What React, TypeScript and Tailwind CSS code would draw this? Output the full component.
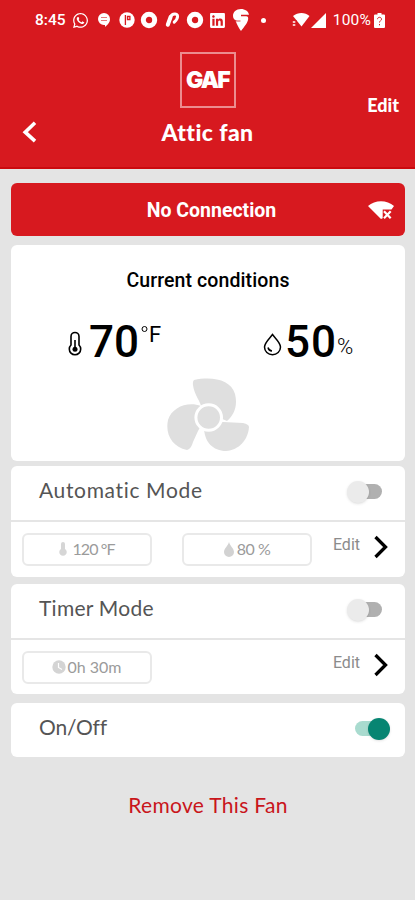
import { useState, ReactNode } from "react";
import { FaLinkedin, FaWhatsapp } from "react-icons/fa";

interface ToggleProps {
  on: boolean;
  onChange: () => void;
}

function Toggle({ on, onChange }: ToggleProps) {
  return (
    <button
      role="switch"
      aria-checked={on}
      onClick={onChange}
      className="relative mr-[22px] mb-[3px] flex h-6 w-9 items-center"
    >
      <span
        className={
          on
            ? "ml-[1px] h-[15px] w-7 rounded-full bg-[#a9dbcf]"
            : "ml-[7px] h-[15px] w-7 rounded-full bg-[#b0b0b0]"
        }
      />
      <span
        className={
          on
            ? "absolute top-[1px] left-[14px] h-[22px] w-[22px] rounded-full bg-[#078572] shadow-sm"
            : "absolute top-[1px] left-0 h-[22px] w-[22px] rounded-full bg-[#ebebeb] shadow-sm"
        }
      />
    </button>
  );
}

function StatusCell({ children }: { children: ReactNode }) {
  return (
    <div className="flex w-[22.8px] shrink-0 items-center justify-center">
      {children}
    </div>
  );
}

function DonutIcon() {
  return (
    <svg width="18" height="18" viewBox="0 0 18 18">
      <circle cx="9" cy="9" r="5.7" fill="none" stroke="white" strokeWidth="5" />
    </svg>
  );
}

function StatusBar() {
  return (
    <div className="flex h-10 items-center text-white">
      <span className="ml-[35px] w-[34.6px] pt-px font-[Roboto] text-[15.5px] font-medium">
        8:45
      </span>
      <StatusCell>
        <FaWhatsapp size={17} />
      </StatusCell>
      <StatusCell>
        <svg width="14" height="16" viewBox="0 0 14 16">
          <path d="M7 1a6 6 0 0 1 6 6c0 4-3 6-5 8v-2H7A6 6 0 0 1 7 1z" fill="white" />
          <path d="M4 5.5h6M4 8.5h6" stroke="#e8787b" strokeWidth="1" />
        </svg>
      </StatusCell>
      <StatusCell>
        <svg width="16" height="16" viewBox="0 0 16 16">
          <circle cx="8" cy="8" r="7.7" fill="white" />
          <path d="M6.4 3v10M8.5 4.5h2.4v3H8.500z" stroke="#d7191f" strokeWidth="1.3" fill="none" />
        </svg>
      </StatusCell>
      <StatusCell>
        <DonutIcon />
      </StatusCell>
      <StatusCell>
        <svg width="15" height="16" viewBox="0 0 15 16" fill="none" stroke="white" strokeLinecap="round">
          <path d="M2.8 12.8L5.6 5" strokeWidth="4" />
          <path d="M5.8 4.5C7 1.5 12.6.8 12.6 4.2c0 2.5-1.500 4.200-3.400 6" strokeWidth="3" />
        </svg>
      </StatusCell>
      <StatusCell>
        <DonutIcon />
      </StatusCell>
      <StatusCell>
        <FaLinkedin size={17} />
      </StatusCell>
      <StatusCell>
        <svg width="18" height="24" viewBox="0 0 18 24">
          <path d="M9 1c-5 0-8 3.2-8 7 0 2.8 1.7 4 4 4.8H3.6C5 17 7.2 20.5 9 23c3-4 7.2-8.500 7.200-12.500 0-1.500-.6-2.200-2-2.200H9V6.7h8C16.4 3.2 13 1 9 1z" fill="white" />
          <path d="M4 13h4.5" stroke="#d7191f" strokeWidth=".8" fill="none" />
        </svg>
      </StatusCell>
      <StatusCell>
        <span className="h-[5px] w-[5px] rounded-full bg-white" />
      </StatusCell>
      <svg className="ml-[17px]" width="18" height="16" viewBox="0 0 18 16" fill="white">
        <path d="M1 4C6 0 13 0 17.5 4L9.5 14.500z" />
        <path d="M0 8h4.500v7H0z" fill="#d7191f" />
        <path d="M.8 10h2.500M.8 13h2.500" stroke="white" strokeWidth="1.5" />
      </svg>
      <svg className="ml-[1px]" width="15" height="15" viewBox="0 0 15 15">
        <path d="M15 0v15H0z" fill="white" />
      </svg>
      <span className="ml-[7px] w-[41px] pt-[2px] font-[Roboto] text-[15.500px] tracking-[0.2px]">100%</span>
      <svg width="11" height="15" viewBox="0 0 11 15">
        <path d="M3.500 0h4v1.500H10a1 1 0 0 1 1 1V14a1 1 0 0 1-1 1H1a1 1 0 0 1-1-1V2.500a1 1 0 0 1 1-1h2.500z" fill="white" />
        <path d="M3.500 6.200c0-2.500 4-2.500 4 0 0 1.500-2 1.500-2 3.300M5.500 11v1.300" stroke="#d7191f" strokeWidth="1" fill="none" />
      </svg>
    </div>
  );
}

function Header() {
  return (
    <header className="h-[169px] border-b-2 border-[#cb090e] bg-[#d7191f] text-white">
      <StatusBar />
      <div className="mt-3 grid h-[106px] grid-cols-[1fr_180px_1fr]">
        <button className="mt-[69px] ml-[22px] h-[22px] w-4" aria-label="Back">
          <svg width="16" height="22" viewBox="0 0 16 22" fill="none" stroke="white" strokeWidth="3.6">
            <path d="M13 1.800L3.200 11.200l9.800 9" />
          </svg>
        </button>
        <div className="flex flex-col items-center">
          <div className="flex h-14 w-14 items-center justify-center border-2 border-[#ec8c8f] font-[Inter] text-[23px] leading-none font-black tracking-[-1.8px]">
            GAF
          </div>
          <h1 className="mt-[11px] font-[Lato] text-[23px] leading-[26px] font-black tracking-[0.4px] whitespace-nowrap">
            Attic fan
          </h1>
        </div>
        <button className="mt-[43px] mr-4 h-5 justify-self-end font-[Lato] text-[18px] leading-5 font-black">
          Edit
        </button>
      </div>
    </header>
  );
}

function ConnectionBanner() {
  return (
    <div className="grid h-[53px] grid-cols-[1fr_260px_1fr] items-center rounded-md bg-[#d7191f] text-white">
      <span />
      <span className="pt-[3px] pl-[7px] text-center font-[Roboto] text-[19.5px] font-bold">
        No Connection
      </span>
      <svg className="mr-[10px] justify-self-end" width="28" height="22" viewBox="0 0 28 22">
        <path d="M1 7C8 .5 20 .5 27 7l-2.500 3.500h-8.800v8.700L14 20z" fill="white" />
        <path d="M17 12.200l6.700 7M23.700 12.200l-6.700 7" stroke="white" strokeWidth="2.2" />
      </svg>
    </div>
  );
}

function Fan() {
  return (
    <svg className="ml-[155px]" width="84" height="78" viewBox="0 0 84 78" fill="#dfdfdf">
      <path d="M28 3C47-1 65 3 69 17c3 12-1 21-8 27L36 33c-1-9-8-15-9-25-.3-2 0-4 1-5z" />
      <path d="M35 29C22 24 6 30 2 43c-3 14 4 27 19 30 3-1 5-4 6-8l5-11c3-5 4-8 5-10z" />
      <path d="M38 50c0 15 9 24 22 24 13-1 22-11 23-24 0-2-2-3-6-4l-20-1z" />
      <circle cx="42.700" cy="40.500" r="12.800" stroke="white" strokeWidth="3" />
    </svg>
  );
}

function CurrentConditions() {
  return (
    <section className="mt-[9px] h-[216px] rounded-md bg-white text-black">
      <h2 className="pt-6 text-center font-[Roboto] text-[19.5px] leading-6 font-medium tracking-[0.1px]">
        Current conditions
      </h2>
      <div className="mt-[22px] flex h-[52px] font-[Roboto] leading-none">
        <div className="ml-[57px] flex w-[195px]">
          <svg className="mt-[16px]" width="14" height="26" viewBox="0 0 14 26" fill="none" stroke="black" strokeWidth="1.600">
            <path d="M3 14V5.500a4 4 0 0 1 8 0V14a5.700 5.700 0 1 1-8 0z" />
            <path d="M7 9v8" strokeWidth="1.600" />
            <circle cx="7" cy="18.200" r="2.500" fill="black" stroke="none" />
          </svg>
          <span className="mt-[5px] ml-[7px] text-[44px] leading-[44px] font-medium">70</span>
          <svg className="mt-[10px] ml-[2px]" width="8" height="8" viewBox="0 0 8 8" fill="none" stroke="black">
            <circle cx="3.500" cy="4" r="2.500" />
          </svg>
          <span className="mt-[9px] text-[22px]">F</span>
        </div>
        <div className="flex">
          <svg className="mt-[18px]" width="19" height="23" viewBox="0 0 19 23" fill="none" stroke="black" strokeWidth="1.5">
            <path d="M9.500 1.500C7 5 1.500 9.500 1.500 14a8 7.700 0 0 0 16 0c0-4.500-5.500-9-8-12.500z" />
            <path d="M5 14.500c.5 2.200 2 3.300 4 3.400" />
          </svg>
          <span className="mt-[5px] ml-[3px] text-[44px] leading-[44px] font-medium tracking-[1px]">50</span>
          <span className="mt-[21px] text-[22px] font-light">%</span>
        </div>
      </div>
      <div className="mt-[10px]">
        <Fan />
      </div>
    </section>
  );
}

function EditLink() {
  return (
    <button className="mt-[2px] mr-[17px] ml-auto flex items-start">
      <span className="font-[Roboto] text-[16px] leading-5 text-[#8b8b8b]">Edit</span>
      <svg className="ml-[14px]" width="14" height="24" viewBox="0 0 14 24" fill="none" stroke="black" strokeWidth="3.300">
        <path d="M1.500 2L11.500 12 1.500 22" />
      </svg>
    </button>
  );
}

function Field({ icon, children }: { icon: ReactNode; children: ReactNode }) {
  return (
    <div className="flex h-[33px] w-[130px] items-center justify-center rounded-md border-2 border-[#e9e9e9] pb-px font-[Lato] text-[16px] text-[#9b9b9b]">
      {icon}
      {children}
    </div>
  );
}

export default function App() {
  const [automatic, setAutomatic] = useState(false);
  const [timer, setTimer] = useState(false);
  const [power, setPower] = useState(true);

  return (
    <div className="min-h-screen w-full bg-[#e4e4e4]">
      <Header />
      <main className="pt-[14px] pr-[10px] pl-[11px]">
        <ConnectionBanner />
        <CurrentConditions />

        <section className="mt-[5px] h-[111px] rounded-md bg-white">
          <div className="flex h-14 items-center justify-between border-b-2 border-[#e5e5e5] pl-7">
            <span className="mb-[7px] font-[Lato] text-[21px] tracking-[0.65px] text-[#555]">Automatic Mode</span>
            <Toggle on={automatic} onChange={() => setAutomatic(!automatic)} />
          </div>
          <div className="flex items-start pt-[11px] pl-[11px]">
            <Field
              icon={
                <svg className="mr-[5px]" width="8" height="14" viewBox="0 0 8 14" fill="#d6d6d6">
                  <path d="M2 7V2a2 2 0 0 1 4 0v5a3.700 3.700 0 1 1-4 0z" />
                </svg>
              }
            >
              <span className="tracking-[-0.9px]">120 °F</span>
            </Field>
            <div className="ml-[30px]">
              <Field
                icon={
                  <svg className="mr-[3px]" width="10" height="15" viewBox="0 0 10 15" fill="#d2d2d2">
                    <path d="M5 0c1 4 5 6.500 5 10A5 5 0 0 1 0 10c0-3.500 4-6 5-10z" />
                  </svg>
                }
              >
                <span className="tracking-[-0.5px]">80 %</span>
              </Field>
            </div>
            <EditLink />
          </div>
        </section>

        <section className="mt-[7px] h-[110px] rounded-md bg-white">
          <div className="flex h-14 items-center justify-between border-b-2 border-[#e5e5e5] pl-7">
            <span className="mb-[7px] font-[Lato] text-[21px] tracking-[0.25px] text-[#555]">Timer Mode</span>
            <Toggle on={timer} onChange={() => setTimer(!timer)} />
          </div>
          <div className="flex items-start pt-[11px] pl-[11px]">
            <Field
              icon={
                <svg className="mr-[1px]" width="14" height="14" viewBox="0 0 14 14">
                  <circle cx="7" cy="7" r="6.700" fill="#d4d4d4" />
                  <path d="M6.500 3v4.500l3.500 2" stroke="white" strokeWidth="1.200" fill="none" />
                </svg>
              }
            >
              0h 30m
            </Field>
            <EditLink />
          </div>
        </section>

        <section className="mt-[9px] flex h-[54px] items-center justify-between rounded-md bg-white pl-7">
          <span className="mb-[7px] font-[Lato] text-[21px] tracking-[-0.2px] text-[#555]">On/Off</span>
          <div className="-mr-[7px]">
            <Toggle on={power} onChange={() => setPower(!power)} />
          </div>
        </section>

        <button className="mt-[34px] block w-full text-center font-[Lato] text-[21px] leading-7 tracking-[0.3px] text-[#c9151b]">
          Remove This Fan
        </button>
      </main>
    </div>
  );
}
